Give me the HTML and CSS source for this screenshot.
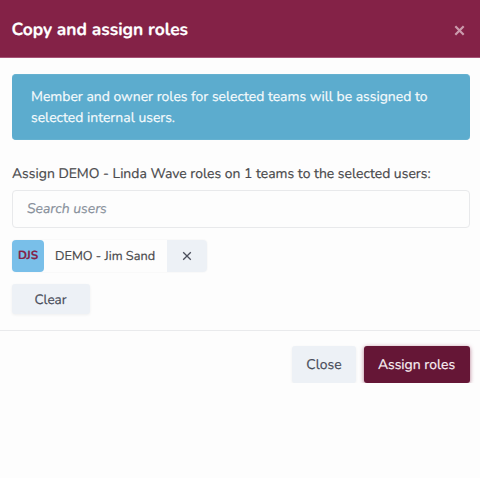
FILE: index.html
```html
<!DOCTYPE html>
<html lang="en">
<head>
<meta charset="utf-8">
<title>Copy and assign roles</title>
<link rel="stylesheet" href="styles.css">
</head>
<body>
<section class="dialog">
  <header class="dialog-header">
    <h1 class="title">Copy and assign roles</h1>
    <svg class="dismiss" viewBox="0 0 10 10"><path d="M1.2 1.2 8.8 8.8M8.8 1.2 1.2 8.8"/></svg>
  </header>
  <main class="dialog-body">
    <div class="notice">Member and owner roles for selected teams will be assigned to<br>selected internal users.</div>
    <p class="label">Assign DEMO - Linda Wave roles on 1 teams to the selected users:</p>
    <div class="search">Search users</div>
    <div class="chip">
      <div class="avatar">DJS</div>
      <div class="name">DEMO - Jim Sand</div>
      <div class="remove"><svg viewBox="0 0 10 10"><path d="M1.2 1.2 8.8 8.8M8.8 1.2 1.2 8.8"/></svg></div>
    </div>
    <div class="button clear">Clear</div>
  </main>
  <footer class="dialog-footer">
    <div class="button close">Close</div>
    <div class="button primary">Assign roles</div>
  </footer>
</section>
</body>
</html>
```
FILE: styles.css
```css
* { box-sizing: border-box; }
body {
  margin: 0;
  background: #fdfdfd;
  color: #4b4b4d;
  font: 13.95px/22px Nunito, Lato, sans-serif;
  text-rendering: geometricPrecision;
  -webkit-text-stroke: 0.2px currentColor;
  white-space: nowrap;
}
.dialog-header {
  height: 58px;
  padding: 0 15px 0 11.5px;
  display: flex;
  align-items: center;
  justify-content: space-between;
  background: #842247;
  border-bottom: 1px solid #a65376;
}
.title { margin: 2px 0 0; font-size: 17.4px; font-weight: 700; line-height: 24px; color: #fff; }
.dismiss { width: 11px; height: 11px; margin-top: 4px; stroke: #cb9bad; stroke-width: 2; }
.dialog-body { height: 273px; padding: 16px 10px 0 12px; border-bottom: 1px solid #e9eaec; }
.notice {
  height: 66px;
  padding: 11px 19px;
  border-radius: 4px;
  background: #5cacce;
  border: 1px solid #65b1d0;
  border-width: 1px 0;
  color: #f4fafc;
  line-height: 21px;
}
.label { margin: 23px 0 5px; }
.search {
  height: 38px;
  padding: 7px 14px;
  border: 1px solid #e8e9eb;
  border-radius: 4px;
  color: #88909b;
  font-style: italic;
}
.chip { display: flex; width: 195px; height: 32px; margin-top: 12px; border-radius: 4px; box-shadow: 0 0 2px #00000010; }
.avatar {
  width: 32px;
  line-height: 32px;
  text-align: center;
  border-radius: 4px;
  background: #79bfe9;
  color: #842247;
  font-size: 11.8px;
  font-weight: 700;
}
.name { width: 123px; padding-left: 11px; line-height: 32px; font-size: 12.75px; }
.remove { width: 40px; display: flex; align-items: center; justify-content: center; border-radius: 0 4px 4px 0; background: #edf1f6; }
.remove svg { width: 10px; height: 10px; margin-right: 1px; margin-bottom: 1px; stroke: #4a4e5b; stroke-width: 1.3; }
.button {
  display: flex;
  align-items: center;
  justify-content: center;
  border-radius: 3px;
  background: #edf1f6;
  color: #4a4e5b;
  box-shadow: 0 1px 3px #0000000f;
}
.clear { width: 78px; height: 30px; margin-top: 12px; padding: 1px 1px 0 0; font-size: 13.5px; }
.dialog-footer { display: flex; justify-content: flex-end; gap: 8px; padding: 15px 10px 0; }
.close { width: 64px; height: 37px; }
.primary { width: 106px; height: 37px; padding-right: 1px; background: #651636; color: #f8eff3; box-shadow: 0 1px 4px #84224799; }
```
